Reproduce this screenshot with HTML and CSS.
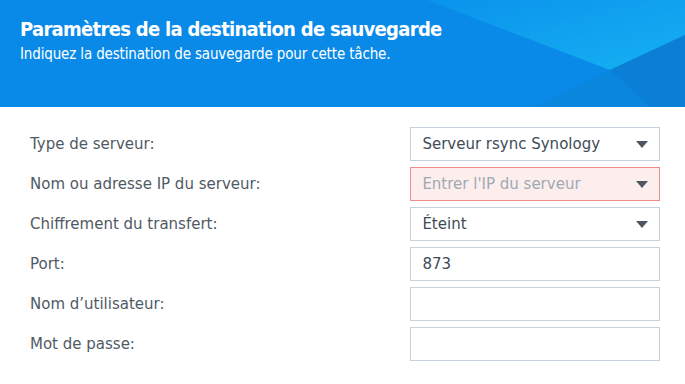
FILE: index.html
```html
<!DOCTYPE html>
<html lang="fr">
    <head>
        <meta charset="UTF-8" />
        <meta name="viewport" content="width=device-width, initial-scale=1.0" />
        <title>Paramètres de la destination de sauvegarde</title>
        <link rel="stylesheet" href="styles.css">
    </head>
    <body>
        <header class="banner">
            <h1>Paramètres de la destination de sauvegarde</h1>
            <p>Indiquez la destination de sauvegarde pour cette tâche.</p>
        </header>

        <form class="form">
            <div class="form-row">
                <label for="serverType">Type de serveur:</label>
                <div class="field combo">
                    <span>Serveur rsync Synology</span>
                    <i class="arrow"></i>
                </div>
            </div>
            <div class="form-row">
                <label for="serverIp">Nom ou adresse IP du serveur:</label>
                <div class="field combo invalid">
                    <span class="placeholder">Entrer l'IP du serveur</span>
                    <i class="arrow"></i>
                </div>
            </div>
            <div class="form-row">
                <label>Chiffrement du transfert:</label>
                <div class="field combo">
                    <span>Éteint</span>
                    <i class="arrow"></i>
                </div>
            </div>
            <div class="form-row">
                <label for="port">Port:</label>
                <input class="field" type="text" id="port" value="873" />
            </div>
            <div class="form-row">
                <label for="user">Nom d’utilisateur:</label>
                <input class="field" type="text" id="user" />
            </div>
            <div class="form-row">
                <label for="pass">Mot de passe:</label>
                <input class="field" type="password" id="pass" />
            </div>
        </form>
    </body>
</html>
```

FILE: styles.css
```css
body {
    font-family: "DejaVu Sans", Verdana, sans-serif;
    margin: 0;
    padding: 0;
    background: #fff;
    color: #505a64;
}

.banner {
    height: 107px;
    box-sizing: border-box;
    padding: 15px 20px 0;
    color: #fff;
    font-family: "DejaVu Sans Condensed", "DejaVu Sans", sans-serif;
    background-color: #0a8ae8;
    background-image: url("data:image/svg+xml,%3Csvg xmlns='http://www.w3.org/2000/svg' width='685' height='107'%3E%3Cdefs%3E%3ClinearGradient id='g' x1='0' y1='0' x2='1' y2='1'%3E%3Cstop offset='0' stop-color='%230a93ec'/%3E%3Cstop offset='1' stop-color='%2316b0f2'/%3E%3C/linearGradient%3E%3C/defs%3E%3Cpolygon points='0,0 427,0 610,70 533,107 0,107' fill='%230a8ae8'/%3E%3Cpolygon points='427,0 685,0 685,35 610,70' fill='url(%23g)'/%3E%3Cpolygon points='610,70 685,35 685,107 650,107' fill='%230b7fd6'/%3E%3Cpolygon points='610,70 650,107 533,107' fill='%230a86de'/%3E%3C/svg%3E");
    background-repeat: no-repeat;
}

.banner h1 {
    margin: 0;
    font-size: 20px;
    font-weight: bold;
    letter-spacing: -0.7px;
    line-height: 28px;
}

.banner p {
    margin: 1px 0 0;
    font-size: 15px;
    letter-spacing: -0.15px;
    line-height: 20px;
}

.form {
    padding: 20px 25px 0 30px;
    display: flex;
    flex-direction: column;
    gap: 6px;
}

.form-row {
    display: flex;
    align-items: center;
    height: 34px;
}

.form-row label {
    width: 381px;
    font-size: 15px;
}

.field {
    box-sizing: border-box;
    width: 250px;
    height: 34px;
    border: 1px solid #c8d2dc;
    background: #fff;
    padding: 0 11px;
    font-family: inherit;
    font-size: 15px;
    color: #414b55;
    outline: none;
}

.combo {
    display: flex;
    align-items: center;
    justify-content: space-between;
}

.combo.invalid {
    background: #fdeeee;
    border-color: #f28c8c;
}

.placeholder {
    color: #a0a8b2;
}

.arrow {
    width: 0;
    height: 0;
    border-left: 6px solid transparent;
    border-right: 6px solid transparent;
    border-top: 7px solid #4e5660;
}
```
